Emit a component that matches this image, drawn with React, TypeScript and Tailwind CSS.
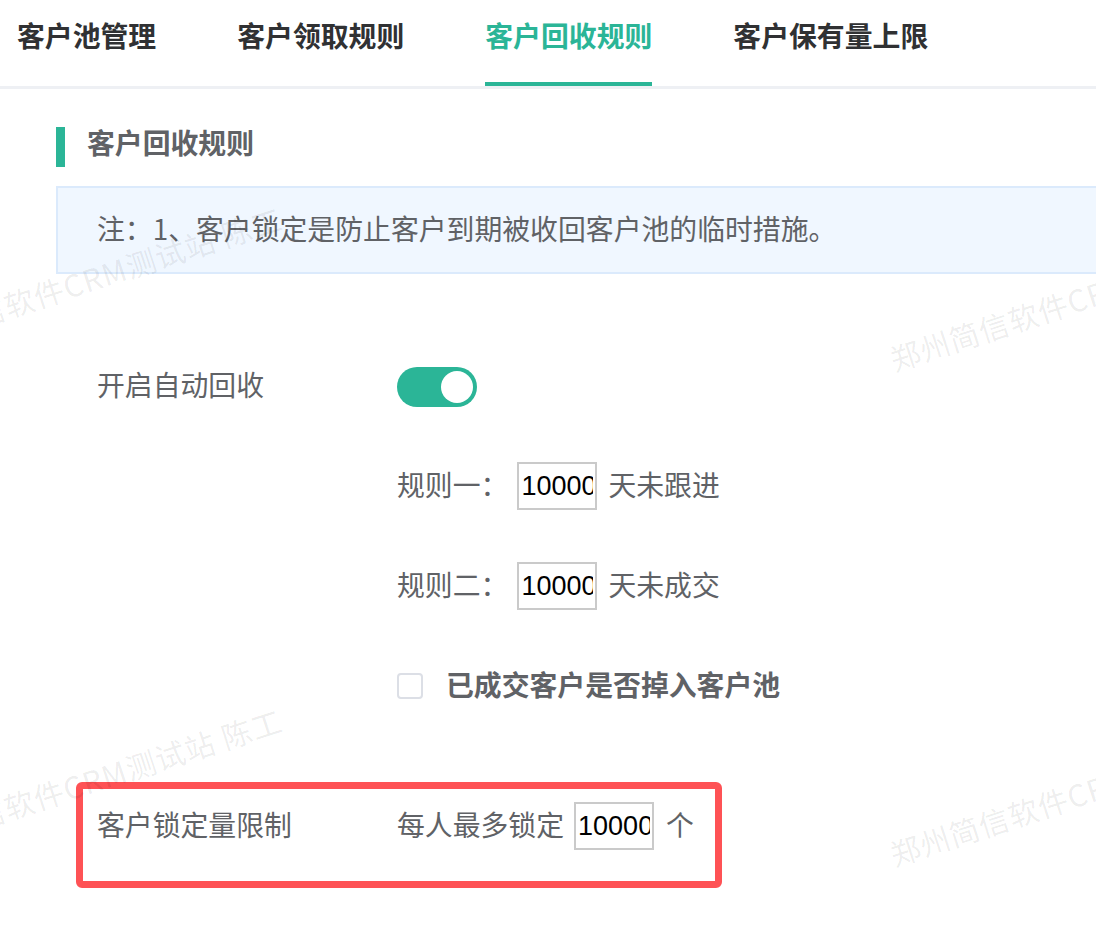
import { useState } from "react"

const tabs = ["客户池管理", "客户领取规则", "客户回收规则", "客户保有量上限"]

const watermarkText = "郑州简信软件CRM测试站 陈工"

const NumberBox = ({ value }: { value: string }) => (
  <input
    readOnly
    value={value}
    className="w-[80px] h-[48px] border-2 border-[#cacaca] bg-white px-[2px] text-[27px] text-black outline-none"
    style={{ fontFamily: '"Liberation Sans", Arial, sans-serif' }}
  />
)

const App = () => {
  const [active] = useState(2)
  const [autoRecycle, setAutoRecycle] = useState(true)
  const [dropDeal, setDropDeal] = useState(false)

  return (
    <div
      className="relative w-[1096px] h-[950px] overflow-hidden bg-white text-[27.85px] text-[#606266]"
      style={{ fontFamily: '"Noto Sans CJK SC", "Noto Sans", sans-serif' }}
    >
      {/* tabs */}
      <div className="flex gap-[81px] pl-[17px] border-b-[3px] border-[#eef0f4]">
        {tabs.map((t, i) => (
          <div
            key={t}
            className={
              i === active
                ? "h-[86px] pt-[18px] leading-[34px] font-semibold text-[#2bb597] border-b-4 border-[#2bb597] box-border"
                : "h-[86px] pt-[18px] leading-[34px] font-semibold text-[#303133]"
            }
          >
            {t}
          </div>
        ))}
      </div>

      <div className="pl-[56px]">
        {/* section title */}
        <div className="mt-[38px] flex items-center h-[40px]">
          <div className="w-[9px] h-[40px] bg-[#2bb597]" />
          <div className="ml-[22px] pb-[8px] font-semibold text-[#606266] leading-none">客户回收规则</div>
        </div>

        {/* notice */}
        <div className="mt-[19px] -mr-[6px] h-[88px] border-2 border-[#dbeafc] bg-[#f0f7ff] flex items-center pl-[39px] pb-[2px] text-[#606266]">
          注：1、客户锁定是防止客户到期被收回客户池的临时措施。
        </div>
      </div>

      {/* form */}
      <div className="pl-[97px]">
        <div className="mt-[93px] flex items-center h-[40px]">
          <div className="w-[300px] pb-[5px]">开启自动回收</div>
          <button
            onClick={() => setAutoRecycle(!autoRecycle)}
            className={
              autoRecycle
                ? "w-[80px] h-[40px] rounded-full bg-[#2bb597] flex items-center justify-end pr-[4px]"
                : "w-[80px] h-[40px] rounded-full bg-[#dcdfe6] flex items-center justify-start pl-[4px]"
            }
          >
            <span className="block w-[32px] h-[32px] rounded-full bg-white" />
          </button>
        </div>

        <div className="mt-[55px] pl-[300px] flex items-center h-[48px]">
          <span className="pb-[3px]">规则一：</span>
          <span className="ml-[9px]">
            <NumberBox value="10000" />
          </span>
          <span className="ml-[11px] pb-[3px]">天未跟进</span>
        </div>

        <div className="mt-[52px] pl-[300px] flex items-center h-[48px]">
          <span className="pb-[3px]">规则二：</span>
          <span className="ml-[9px]">
            <NumberBox value="100000" />
          </span>
          <span className="ml-[11px] pb-[3px]">天未成交</span>
        </div>

        <div className="mt-[52px] pl-[300px] flex items-center h-[48px]">
          <button
            onClick={() => setDropDeal(!dropDeal)}
            className="w-[26px] h-[26px] rounded-[4px] border-2 border-[#dcdfe6] bg-white"
          />
          <span className="ml-[23px] pb-[3px] font-semibold text-[#606266]">已成交客户是否掉入客户池</span>
        </div>

        {/* locked amount limit */}
        <div className="mt-[72px] -ml-[21px] w-[646px] h-[106px] border-[7px] border-[#fe5255] rounded-[6px] pl-[14px] pt-[13px]">
          <div className="flex items-center h-[48px]">
            <div className="w-[300px] pb-[3px]">客户锁定量限制</div>
            <span className="pb-[3px]">每人最多锁定</span>
            <span className="ml-[10px]">
              <NumberBox value="100000" />
            </span>
            <span className="ml-[12px] pb-[3px]">个</span>
          </div>
        </div>
      </div>

      {/* watermark */}
      <div className="pointer-events-none absolute inset-0 text-[30px] leading-none tracking-[1px] text-black/[0.08]">
        <span className="absolute left-[-118px] top-[330px] whitespace-nowrap origin-top-left rotate-[-18deg]">
          {watermarkText}
        </span>
        <span className="absolute left-[886px] top-[345px] whitespace-nowrap origin-top-left rotate-[-18deg]">
          {watermarkText}
        </span>
        <span className="absolute left-[-118px] top-[832px] whitespace-nowrap origin-top-left rotate-[-18deg]">
          {watermarkText}
        </span>
        <span className="absolute left-[886px] top-[840px] whitespace-nowrap origin-top-left rotate-[-18deg]">
          {watermarkText}
        </span>
      </div>
    </div>
  )
}

export default App
